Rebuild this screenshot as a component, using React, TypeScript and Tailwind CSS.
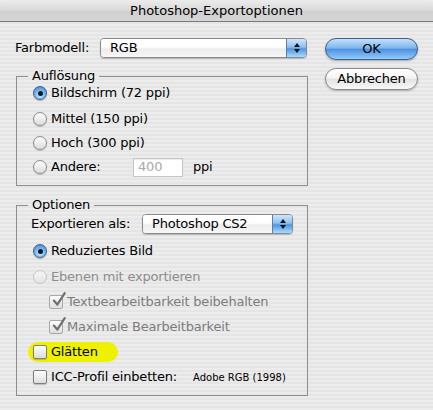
import type { ReactNode } from "react"

const FONT = "font-['DejaVu_Sans','Liberation_Sans',sans-serif]"

/** Aqua radio button, drawn with nested spans. */
function Radio({ checked = false, disabled = false }: { checked?: boolean; disabled?: boolean }) {
  if (checked) {
    return (
      <span className="flex h-[14px] w-[14px] shrink-0 items-center justify-center rounded-full border border-[#3d5f8f] bg-[radial-gradient(circle_at_50%_70%,#c9ecff_0%,#6eaee8_55%,#3f7fc8_100%)] shadow-[0_1px_1px_rgba(0,0,0,0.25)]">
        <span className="h-[5px] w-[5px] rounded-full bg-[#0c1a2c]" />
      </span>
    )
  }
  return (
    <span
      className={
        disabled
          ? "h-[14px] w-[14px] shrink-0 rounded-full border border-[#c4c4c4] bg-[linear-gradient(#f6f6f6,#e4e4e4)]"
          : "h-[14px] w-[14px] shrink-0 rounded-full border border-[#8b8b8b] bg-[linear-gradient(#fdfdfd,#dcdcdc)] shadow-[0_1px_1px_rgba(0,0,0,0.2)]"
      }
    />
  )
}

function Checkbox({ checked = false, disabled = false }: { checked?: boolean; disabled?: boolean }) {
  return (
    <span
      className={
        "relative h-[14px] w-[14px] shrink-0 rounded-[2px] border bg-[linear-gradient(#fcfcfc,#dedede)] " +
        (disabled ? "border-[#a9a9a9]" : "border-[#7d7d7d] shadow-[0_1px_1px_rgba(0,0,0,0.2)]")
      }
    >
      {checked && (
        <svg viewBox="0 0 14 14" className="absolute -top-[4px] left-[1px] h-[16px] w-[16px]" aria-hidden="true">
          <path d="M2.5 7.5 L5.5 11 L12 1" fill="none" stroke={disabled ? "#6f6f6f" : "#111"} strokeWidth="1.9" strokeLinecap="round" strokeLinejoin="round" />
        </svg>
      )}
    </span>
  )
}

/** Popup menu with the blue double-arrow stepper on the right. */
function PopUp({ value, className }: { value: string; className: string }) {
  return (
    <div className={"flex h-[20px] overflow-hidden rounded-[4px] border border-[#8a8a8a] shadow-[0_1px_1px_rgba(0,0,0,0.2)] " + className}>
      <div className="flex flex-1 items-center bg-[linear-gradient(#ffffff,#ffffff_45%,#ececec_55%,#f7f7f7)] pl-[9px] text-[13px] text-black">
        {value}
      </div>
      <div className="flex w-[20px] flex-col items-center justify-center gap-[2px] border-l border-[#5a7fae] bg-[linear-gradient(#cfe6fb,#8cc0f0_45%,#4f95e0_55%,#a8dcff)]">
        <svg viewBox="0 0 6 4" className="h-[4px] w-[6px]" aria-hidden="true">
          <path d="M3 0 L6 4 L0 4 Z" fill="#111" />
        </svg>
        <svg viewBox="0 0 6 4" className="h-[4px] w-[6px]" aria-hidden="true">
          <path d="M0 0 L6 0 L3 4 Z" fill="#111" />
        </svg>
      </div>
    </div>
  )
}

function Group({ title, children, className = "" }: { title: string; children: ReactNode; className?: string }) {
  return (
    <fieldset className={"w-[292px] border border-[#8e8e8e] " + className}>
      <legend className="ml-[11px] px-[4px] text-[13px] leading-[16px] text-black">{title}</legend>
      {children}
    </fieldset>
  )
}

function Row({ h, className = "", children }: { h: string; className?: string; children: ReactNode }) {
  return <div className={"flex items-center " + h + " " + className}>{children}</div>
}

export default function App() {
  return (
    <div
      className={
        "flex h-[410px] w-[433px] flex-col overflow-hidden bg-[repeating-linear-gradient(0deg,#ececec_0px,#ececec_2px,#e5e5e5_2px,#e5e5e5_4px)] text-[13px] tracking-[-0.2px] text-black " +
        FONT
      }
    >
      {/* title bar */}
      <div className="flex h-[22px] shrink-0 items-center justify-center rounded-t-[5px] border-b border-[#7b7b7b] bg-[linear-gradient(#ececec,#d9d9d9_50%,#cfcfcf_51%,#d6d6d6)] text-[13px] tracking-normal">
        Photoshop-Exportoptionen
      </div>

      <div className="flex">
        <div className="ml-[16px] mt-[16px] flex flex-col">
          <div className="flex h-[20px] items-center">
            <span className="-ml-px w-[85px]">Farbmodell:</span>
            <PopUp value="RGB" className="w-[207px]" />
          </div>

          <Group title="Auflösung" className="mt-[10px] pb-[6px]">
            <div className="pl-[16px]">
              <Row h="h-[24px]" className="-mt-[3px] gap-[4px]">
                <Radio checked />
                <span>Bildschirm (72 ppi)</span>
              </Row>
              <Row h="h-[24px]" className="mt-[2px] gap-[4px]">
                <Radio />
                <span>Mittel (150 ppi)</span>
              </Row>
              <Row h="h-[24px]" className="gap-[4px]">
                <Radio />
                <span>Hoch (300 ppi)</span>
              </Row>
              <Row h="h-[24px]">
                <Radio />
                <span className="ml-[4px] w-[82px]">Andere:</span>
                <span className="flex h-[19px] w-[50px] items-center border border-[#c6c6c6] bg-white pl-[4px] text-[#a9a9a9] shadow-[inset_0_1px_1px_rgba(0,0,0,0.08)]">
                  400
                </span>
                <span className="ml-[10px]">ppi</span>
              </Row>
            </div>
          </Group>

          <Group title="Optionen" className="mt-[11px] pb-[6px]">
            <Row h="h-[22px]" className="pl-[14px]">
              <span className="w-[111px]">Exportieren als:</span>
              <PopUp value="Photoshop CS2" className="w-[151px]" />
            </Row>
            <div className="pl-[16px]">
              <Row h="h-[26px]" className="mt-[3px] gap-[4px]">
                <Radio checked />
                <span>Reduziertes Bild</span>
              </Row>
              <Row h="h-[26px]" className="gap-[4px] text-[#8d8d8d]">
                <Radio disabled />
                <span>Ebenen mit exportieren</span>
              </Row>
              <Row h="h-[24px]" className="gap-[4px] pl-[16px] text-[#7c7c7c]">
                <Checkbox checked disabled />
                <span>Textbearbeitbarkeit beibehalten</span>
              </Row>
              <Row h="h-[25px]" className="gap-[4px] pl-[16px] text-[#7c7c7c]">
                <Checkbox checked disabled />
                <span>Maximale Bearbeitbarkeit</span>
              </Row>
              <Row h="h-[26px]">
                <span className="-ml-[5px] flex h-[20px] w-[90px] items-center gap-[4px] rounded-full bg-[#eef200] pl-[5px]">
                  <Checkbox />
                  <span>Glätten</span>
                </span>
              </Row>
              <Row h="h-[24px]" className="gap-[4px]">
                <Checkbox />
                <span className="w-[138px]">ICC-Profil einbetten:</span>
                <span className="text-[10px] tracking-normal">Adobe RGB (1998)</span>
              </Row>
            </div>
          </Group>
        </div>

        <div className="ml-[17px] mt-[16px] flex flex-col gap-[8px]">
          <button className="h-[22px] w-[93px] rounded-full border border-[#3f5f8e] bg-[linear-gradient(#c4e0fb,#7fb6ee_45%,#4d92e2_52%,#92ccfb)] text-[13px] text-black shadow-[0_1px_2px_rgba(0,0,0,0.3)]">
            OK
          </button>
          <button className="h-[22px] w-[93px] rounded-full border border-[#8a8a8a] bg-[linear-gradient(#ffffff,#f4f4f4_45%,#e3e3e3_52%,#f8f8f8)] text-[13px] text-black shadow-[0_1px_2px_rgba(0,0,0,0.25)]">
            Abbrechen
          </button>
        </div>
      </div>
    </div>
  )
}
